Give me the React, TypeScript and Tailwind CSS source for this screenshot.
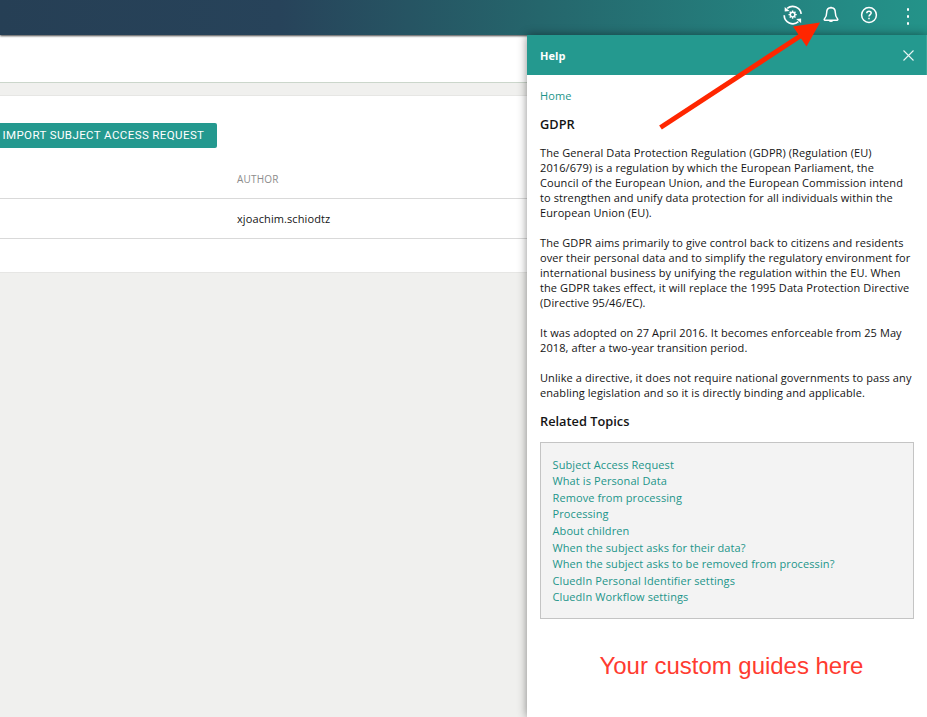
const paragraphs: string[][] = [
  [
    'The General Data Protection Regulation (GDPR) (Regulation (EU)',
    '2016/679) is a regulation by which the European Parliament, the',
    'Council of the European Union, and the European Commission intend',
    'to strengthen and unify data protection for all individuals within the',
    'European Union (EU).',
  ],
  [
    'The GDPR aims primarily to give control back to citizens and residents',
    'over their personal data and to simplify the regulatory environment for',
    'international business by unifying the regulation within the EU. When',
    'the GDPR takes effect, it will replace the 1995 Data Protection Directive',
    '(Directive 95/46/EC).',
  ],
  [
    'It was adopted on 27 April 2016. It becomes enforceable from 25 May',
    '2018, after a two-year transition period.',
  ],
  [
    'Unlike a directive, it does not require national governments to pass any',
    'enabling legislation and so it is directly binding and applicable.',
  ],
];

const topics = [
  'Subject Access Request',
  'What is Personal Data',
  'Remove from processing',
  'Processing',
  'About children',
  'When the subject asks for their data?',
  'When the subject asks to be removed from processin?',
  'CluedIn Personal Identifier settings',
  'CluedIn Workflow settings',
];

function SyncGearIcon() {
  return (
    <svg width="20" height="20" viewBox="0 0 20 20" fill="none" stroke="white" strokeWidth="1.7">
      <path d="M4.2 3.400A8.600 8.600 0 0 1 18.200 8.800" />
      <path d="M1.200 10.200A8.600 8.600 0 0 0 15.400 16.600" />
      <path d="M1.700 2v4.500l4.800-.5z" fill="white" stroke="none" />
      <path d="M18.100 18v-4.600l-4.900.6z" fill="white" stroke="none" />
      <circle cx="9.600" cy="9.600" r="2.300" strokeWidth="1.500" />
      <path
        d="M9.600 5.500v1.600M9.600 12.100v1.600M5.500 9.600h1.600M12.100 9.600h1.600M6.700 6.700l1.100 1.100M11.400 11.400l1.100 1.100M12.500 6.700l-1.100 1.100M7.800 11.400l-1.100 1.100"
        strokeWidth="1.400"
      />
    </svg>
  );
}

function BellIcon() {
  return (
    <svg width="18" height="18" viewBox="0 0 18 18" fill="none" stroke="white" strokeWidth="1.5" strokeLinejoin="round">
      <path d="M9 1.8c-2.9 0-4.3 2-4.3 4.6 0 3.8-.9 5.100-2.300 6.600-.4.5-.2 1.200.5 1.200h12.200c.7 0 .9-.7.5-1.200-1.400-1.500-2.300-2.800-2.300-6.600 0-2.600-1.400-4.600-4.300-4.600z" />
      <path d="M6.700 14.400a2.400 2.300 0 0 0 4.600 0z" fill="white" stroke="none" />
      <path d="M8.200 1.500h1.600" />
    </svg>
  );
}

function HelpIcon() {
  return (
    <svg width="18" height="18" viewBox="0 0 18 18" fill="none" stroke="white" strokeWidth="1.5">
      <circle cx="9" cy="9" r="7.400" />
      <path d="M6.800 7.300c0-1.300.9-2.100 2.200-2.100s2.200.8 2.200 1.900c0 1.500-2.200 1.700-2.200 3.400" />
      <path d="M9 11.700v1.500" />
    </svg>
  );
}

export default function App() {
  return (
    <div className="relative flex h-[717px] w-[927px] flex-col overflow-hidden bg-[#f0f0ee] font-['Open_Sans',sans-serif] text-[#141414]">
      <header className="relative z-10 flex h-[35px] shrink-0 items-start bg-[linear-gradient(90deg,#263f55_0px,#27435a_280px,#25666c_540px,#248b85_850px,#249389_927px)] shadow-[0_1px_2px_rgba(0,0,0,0.75)]">
        <div className="ml-[783px] mt-[5px] h-5 w-5">
          <SyncGearIcon />
        </div>
        <div className="ml-[19px] mt-[6px]">
          <BellIcon />
        </div>
        <div className="ml-5 mt-[6px]">
          <HelpIcon />
        </div>
        <div className="ml-[28.5px] mt-[8px] flex flex-col gap-[4px]">
          <i className="h-[3px] w-[2.5px] rounded-[1px] bg-white" />
          <i className="h-[3px] w-[2.5px] rounded-[1px] bg-white" />
          <i className="h-[3px] w-[2.5px] rounded-[1px] bg-white" />
        </div>
      </header>

      <div className="flex min-h-0 flex-1">
        <main className="w-[527px] shrink-0">
          <div className="h-12 border-b border-[#cbd6cb] bg-white" />
          <section className="mt-3 h-[178px] border-y border-[#e6e6e4] bg-white pt-[27px]">
            <button className="flex h-[25px] w-[217px] items-center whitespace-nowrap rounded-r-[2px] bg-[#24998f] pl-[2.5px] font-['Roboto',sans-serif] text-[11.5px] tracking-[0.4px] text-white">
              IMPORT SUBJECT ACCESS REQUEST
            </button>
            <div className="flex h-[51px] items-center border-b border-[#d9d9d9] pl-[237px] pt-3 text-[10px] tracking-[0.2px] text-[#8c8c8c]">
              AUTHOR
            </div>
            <div className="flex h-10 items-center border-b border-[#d9d9d9] pl-[237px] pt-[2px] text-[11px] tracking-[0.1px]">
              xjoachim.schiodtz
            </div>
          </section>
        </main>

        <aside className="relative z-20 flex w-[400px] flex-col bg-white shadow-[0_0_9px_rgba(0,0,0,0.45)]">
          <div className="flex h-10 shrink-0 items-center justify-between border-r border-[#3aa69b] bg-[#24998f] pl-[13px] pr-3 text-[11px] font-bold tracking-[0.1px] text-white">
            <span className="pt-[2px]">Help</span>
            <svg width="11" height="11" viewBox="0 0 11 11" stroke="white" strokeWidth="1.1" strokeOpacity=".9">
              <path d="M.5.5l10 10M10.5.5l-10 10" />
            </svg>
          </div>
          <div className="flex flex-col pl-[13px] pr-[13px] text-[11px] leading-[15px] tracking-[0.095px]">
            <a className="mt-[13px] text-[#1c958a]">Home</a>
            <h2 className="mt-[13px] text-[12.8px] font-semibold leading-4 tracking-normal">GDPR</h2>
            <div className="mt-[13px] flex flex-col gap-[15px]">
              {paragraphs.map((lines) => (
                <p key={lines[0]}>
                  {lines.map((line) => (
                    <span key={line} className="block whitespace-nowrap">
                      {line}
                    </span>
                  ))}
                </p>
              ))}
            </div>
            <h2 className="mt-[13px] text-[12.8px] font-semibold leading-4 tracking-normal">Related Topics</h2>
            <ul className="mt-[13px] flex h-[177px] flex-col border border-[#c4c4c4] bg-[#f3f3f3] pl-[11.5px] pt-[13.8px] leading-[16.55px] text-[#1c958a]">
              {topics.map((topic) => (
                <li key={topic} className="whitespace-nowrap">
                  {topic}
                </li>
              ))}
            </ul>
            <p className="mt-[33px] whitespace-nowrap pl-[59.5px] font-['Liberation_Sans',sans-serif] text-[24px] leading-7 tracking-[-0.03px] text-[#ff3b30]">
              Your custom guides here
            </p>
          </div>
        </aside>
      </div>

      <svg className="pointer-events-none absolute left-0 top-0 z-30" width="927" height="140" viewBox="0 0 927 140">
        <path d="M660.500 127.500L801 35.500" stroke="#ff2600" strokeWidth="5" />
        <path d="M820 22.500L793 26.500L806.500 46.500z" fill="#ff2600" />
      </svg>
    </div>
  );
}
